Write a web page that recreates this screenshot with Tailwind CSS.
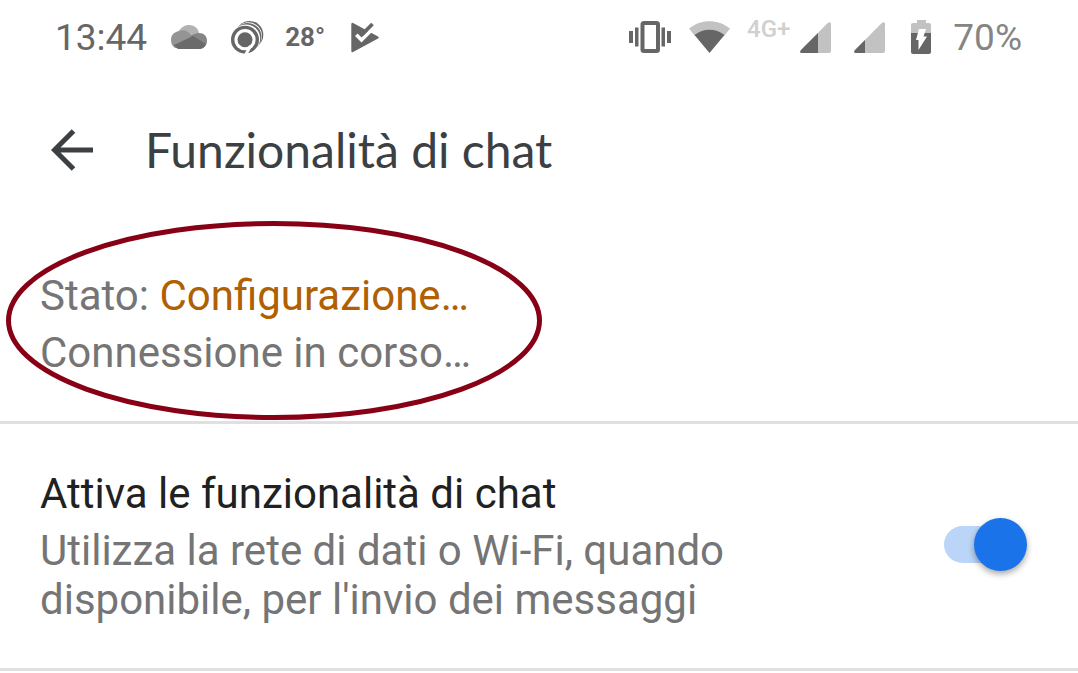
<!DOCTYPE html>
<html lang="it">
<head>
<meta charset="UTF-8" />
<meta name="viewport" content="width=device-width, initial-scale=1" />
<title>Funzionalità di chat</title>
<script src="https://cdn.jsdelivr.net/npm/@tailwindcss/browser@4"></script>
</head>
<body class="bg-white min-h-screen overflow-x-hidden font-[Roboto,sans-serif] text-[42px] leading-[49px] text-[#757575]">

  <!-- STATUS BAR -->
  <div class="flex items-center justify-between h-[74px] pl-[55px] pr-14 text-[#666]">
    <div class="flex items-center">
      <span class="text-[37px]">13:44</span>
      <svg class="ml-6 w-9 h-6" viewBox="0 0 36 24" aria-hidden="true">
        <path d="M8 6C11 1 15 0 18 0c5 0 9 3 10 8l-8 5z" fill="#b2b2b2" />
        <path d="M8 6c5-2 9 0 12 4l8 3L4 23C1 21 0 18 0 15c0-5 3-8 8-9z" fill="#949494" />
        <path d="M19 12c3-3 6-4 9-4 5 0 8 3 8 8 0 4-3 8-8 8z" fill="#858585" />
        <path d="M3 20L22 11l13 8c-1 3-4 5-7 5H8c-2 0-4-2-5-4z" fill="#6b6b6b" />
      </svg>
      <svg class="ml-6 w-8 h-[33px] overflow-visible" viewBox="0 0 32 33" fill="#666" aria-hidden="true">
        <circle cx="18.500" cy="13.700" r="13.800" />
        <circle cx="17.300" cy="15" r="13.700" fill="#fff" />
        <circle cx="16.700" cy="15.700" r="13.800" />
        <circle cx="15" cy="17.600" r="14.200" fill="#fff" />
        <circle cx="14" cy="18.700" r="14" />
        <circle cx="14" cy="18.700" r="10.600" fill="#fff" />
        <circle cx="14" cy="18.700" r="7.500" />
        <path d="M19.500 25L14.500 34" fill="none" stroke="#fff" stroke-width="3" />
      </svg>
      <span class="ml-[22px] text-[26px] font-bold">28°</span>
      <svg class="ml-[26px] w-7 h-[31px]" viewBox="0 0 28 31" fill="none" aria-hidden="true">
        <path d="M1.500 2v27L26.500 15.500z" fill="#666" stroke="#666" stroke-width="2.400" stroke-linejoin="round" />
        <path d="M5.300 12.700l5.200 5.300L26 2.500" stroke="#fff" stroke-width="3.600" />
        <path d="M10.500 13L21.500 2" stroke="#666" stroke-width="3.800" />
      </svg>
    </div>
    <div class="flex items-center">
      <svg class="w-[42px] h-8" viewBox="0 0 42 32" fill="#666" aria-hidden="true">
        <path d="M0 10h4v12H0zM6 6.500h3.500v19H6zM32.500 6.500H36v19h-3.500zM38 10h4v12h-4z" />
        <rect x="13.500" y="2" width="15.500" height="28" rx="1.500" fill="none" stroke="#666" stroke-width="4" />
      </svg>
      <svg class="ml-[18px] w-[41px] h-8" viewBox="0 0 41 32" aria-hidden="true">
        <path d="M0 7.500C12-2.300 29-2.300 41 7.500L35.500 14.500h-30z" fill="#c2c2c2" />
        <path d="M5.500 14c9-7 21-7 30 0L20.500 32z" fill="#666" />
      </svg>
      <span class="ml-[17px] mb-4 text-[24px] leading-6 font-medium text-[#d0d0d0]">4G+</span>
      <svg class="ml-[10px] w-[31px] h-[31px]" viewBox="0 0 31 31" aria-hidden="true">
        <path d="M28 .8Q31-1 31 2v27q0 2-2 2H2q-3 0-1-3z" fill="#c2c2c2" />
        <path d="M18 11v20H2q-3 0-1-3z" fill="#666" />
      </svg>
      <svg class="ml-[23px] w-[31px] h-[31px]" viewBox="0 0 31 31" aria-hidden="true">
        <path d="M28 .8Q31-1 31 2v27q0 2-2 2H2q-3 0-1-3z" fill="#c2c2c2" />
        <path d="M11 18v13H2q-3 0-1-3z" fill="#666" />
      </svg>
      <svg class="ml-[26px] w-5 h-[34px]" viewBox="0 0 20 34" aria-hidden="true">
        <path d="M6 0h9v3h3q2 0 2 2v8H0V5q0-2 2-2h4z" fill="#c2c2c2" />
        <path d="M0 13h20v19q0 2-2 2H2q-2 0-2-2z" fill="#666" />
        <path d="M8 9h7l-2.500 7.500H16L7.500 30V20H5z" fill="#fff" />
      </svg>
      <span class="ml-[22px] text-[37px] text-[#858585]">70%</span>
    </div>
  </div>

  <!-- HEADER -->
  <header class="flex items-center h-[152px] pl-[51px] text-[#3c4043]">
    <button type="button" aria-label="Indietro">
      <svg class="w-[42px] h-[42px]" viewBox="0 0 42 42" fill="none" stroke="currentColor" stroke-width="5" aria-hidden="true">
        <path d="M42 21H4M22.500 2L3.500 21l19 19" />
      </svg>
    </button>
    <h1 class="ml-[52px] font-[Lato,sans-serif] text-[48px] leading-[56px]">Funzionalità di chat</h1>
  </header>

  <main>
    <!-- STATUS -->
    <section class="relative pt-[45px] pb-11 px-10 border-b-3 border-[#e0e0e0]">
      <p>Stato: <span class="text-[#b06000]">Configurazione…</span></p>
      <p class="mt-2">Connessione in corso…</p>
      <svg class="absolute left-[6px] -top-[5px] w-[536px] h-[199px]" viewBox="0 0 536 199" fill="none" aria-hidden="true">
        <ellipse cx="268" cy="99.500" rx="265.500" ry="97" stroke="#880015" stroke-width="5" />
      </svg>
    </section>

    <!-- CHAT SWITCH -->
    <section class="flex items-center justify-between pt-[45px] pb-11 pl-10 pr-[51px] border-b-3 border-[#e0e0e0]">
      <label for="chat" class="max-w-[720px]">
        <span class="block text-[#212121]">Attiva le funzionalità di chat</span>
        <span class="block mt-2">Utilizza la rete di dati o Wi-Fi, quando disponibile, per l'invio dei messaggi</span>
      </label>
      <input type="checkbox" role="switch" id="chat" name="chat" checked
        class="appearance-none relative shrink-0 mb-1 w-[83px] h-[53px] cursor-pointer before:absolute before:left-0 before:top-2 before:w-[74px] before:h-[37px] before:rounded-full before:bg-[#bad5f8] after:absolute after:right-0 after:top-0 after:size-[53px] after:rounded-full after:bg-[#1a73e8] after:shadow-[0_3px_6px_rgba(0,0,0,0.35)]" />
    </section>
  </main>

</body>
</html>
